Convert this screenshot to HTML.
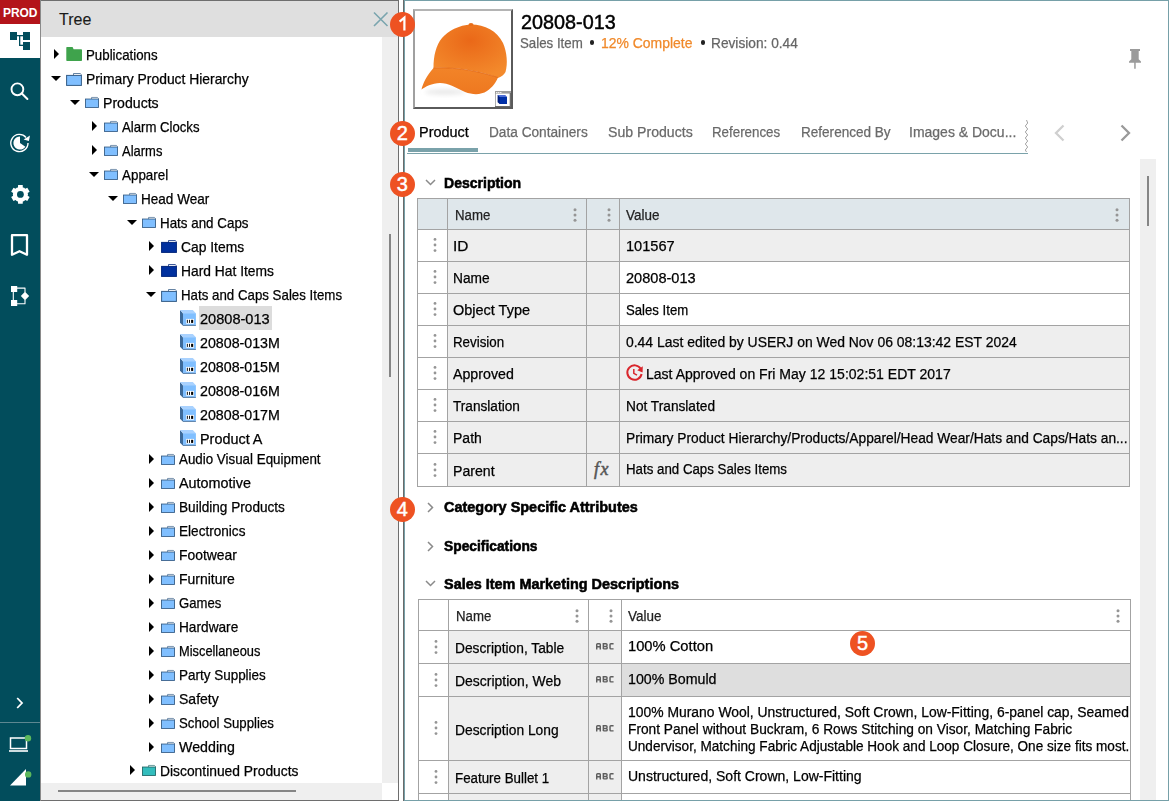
<!DOCTYPE html>
<html><head><meta charset="utf-8"><style>
*{margin:0;padding:0;box-sizing:border-box}
html,body{width:1169px;height:801px;overflow:hidden;background:#fff;font-family:"Liberation Sans",sans-serif;color:#000}
.a{position:absolute}
svg{position:absolute;overflow:visible}
.t{position:absolute;white-space:nowrap;line-height:20px;height:20px;-webkit-text-stroke:0.25px currentColor}
</style></head><body>
<div class="a" style="left:0;top:0;width:40px;height:801px;background:#024d5c"></div>
<div class="a" style="left:0;top:0;width:40px;height:24px;background:#b3141a"></div>
<div class="t" style="left:3px;top:3px;font-size:12px;font-weight:bold;color:#fff;letter-spacing:-0.1px;-webkit-text-stroke:0">PROD</div>
<div class="a" style="left:0;top:24px;width:40px;height:34px;background:#fff"></div>
<svg style="left:0;top:0" width="40" height="60" viewBox="0 0 40 60">
<g fill="#024d5c"><rect x="10" y="32" width="7" height="8"/><rect x="23" y="32" width="7" height="8"/><rect x="23" y="42" width="7" height="8"/>
<rect x="17" y="35" width="6" height="1.3"/><rect x="19" y="35" width="1.3" height="11"/><rect x="19" y="44.7" width="4" height="1.3"/></g></svg>
<svg style="left:0;top:70px" width="40" height="40"><circle cx="17.4" cy="19.3" r="5.9" fill="none" stroke="#fff" stroke-width="1.9"/>
<line x1="21.6" y1="23.2" x2="27.4" y2="29" stroke="#fff" stroke-width="2" stroke-linecap="round"/></svg>
<svg style="left:0;top:123px" width="40" height="40"><path d="M28 20 A8.6 8.6 0 1 1 25.99 14.47" fill="none" stroke="#fff" stroke-width="1.4"/>
<polygon points="30,12.6 28.9,18 23.6,16.4" fill="#fff"/>
<path d="M20 20 L25.41 23.79 A6.6 6.6 0 1 1 20 13.4 Z" fill="#fff"/></svg>
<svg style="left:0;top:180px" width="40" height="40"><polygon points="16.60,7.82 17.99,7.40 18.08,5.09 22.72,5.09 22.81,7.40 24.20,7.82 25.25,8.82 27.31,7.73 29.63,11.75 27.66,12.99 28.00,14.40 27.66,15.81 29.63,17.05 27.31,21.07 25.25,19.98 24.20,20.98 22.81,21.40 22.72,23.71 18.08,23.71 17.99,21.40 16.60,20.98 15.55,19.98 13.49,21.07 11.17,17.05 13.14,15.81 12.80,14.40 13.14,12.99 11.17,11.75 13.49,7.73 15.55,8.82" fill="#fff"/><circle cx="20.4" cy="14.4" r="3.4" fill="#024d5c"/></svg>
<svg style="left:0;top:230px" width="40" height="30"><path d="M12 5.2 H27 V24.8 L19.5 21.2 L12 24.8 Z" fill="none" stroke="#fff" stroke-width="2.3" stroke-linejoin="round"/></svg>
<svg style="left:0;top:280px" width="40" height="35"><g fill="#fff"><rect x="11" y="6" width="6.2" height="6"/><rect x="11" y="20" width="6.2" height="6"/>
<polygon points="25,11.8 29.2,16 25,20.2 20.8,16"/></g>
<g stroke="#fff" stroke-width="1.1" fill="none" stroke-linejoin="round"><path d="M17 8.1 H25 V12.5"/><path d="M17 23.8 H25 V19.5"/><path d="M13.3 12 V20"/></g></svg>
<svg style="left:0;top:690px" width="40" height="30"><path d="M17.2 8 L22 13 L17.2 18" fill="none" stroke="#fff" stroke-width="1.8"/></svg>
<div class="a" style="left:0;top:722px;width:40px;height:1px;background:#5d8791"></div>
<svg style="left:0;top:731.5px" width="40" height="30"><rect x="10.5" y="6" width="16" height="10.5" fill="none" stroke="#fff" stroke-width="1.5"/>
<rect x="9" y="18.2" width="19" height="1.6" fill="#fff"/><circle cx="28" cy="6.2" r="3.2" fill="#5cb85c"/></svg>
<svg style="left:0;top:760px" width="40" height="30"><polygon points="10,25.5 26,25.5 26,9" fill="#fff"/><circle cx="28.2" cy="14.4" r="3.2" fill="#5cb85c"/></svg>
<div class="a" style="left:40px;top:0;width:1px;height:801px;background:#8a8a8a"></div>
<div class="a" style="left:41px;top:0;width:358px;height:1px;background:#6e6e6e"></div>
<div class="a" style="left:41px;top:1px;width:357px;height:36px;background:#dfdfdf"></div>
<div class="t" style="left:59px;top:10px;font-size:16px;color:#1a1a1a;-webkit-text-stroke:0.1px #1a1a1a">Tree</div>
<svg style="left:370px;top:8px" width="22" height="22"><path d="M4 4.5 L17.5 18 M17.5 4.5 L4 18" stroke="#7aa5ae" stroke-width="1.6"/></svg>
<div class="a" style="left:382px;top:37px;width:16px;height:746px;background:#efefef"></div>
<div class="a" style="left:389px;top:234px;width:2px;height:143px;background:#858585"></div>
<div class="a" style="left:41px;top:783px;width:341px;height:17px;background:#efefef"></div>
<div class="a" style="left:58px;top:790px;width:238px;height:2px;background:#858585"></div>
<div class="a" style="left:398px;top:0;width:1px;height:801px;background:#6e6e6e"></div>
<div class="a" style="left:41px;top:800px;width:358px;height:1px;background:#6e6e6e"></div>
<svg style="left:54px;top:49px" width="5" height="10"><polygon points="0,0 5,5 0,10" fill="#000"/></svg>
<svg width="16" height="14" viewBox="0 0 16 14" preserveAspectRatio="none" style="left:66px;top:47px">
<path d="M0.3 0.6 Q0.3 0 1 0 H6.6 L7.6 2.3 H15.2 Q16 2.3 16 3 V13.3 Q16 14 15.2 14 H1 Q0.3 14 0.3 13.3 Z" fill="#3fa34c"/></svg>
<div class="t" style="left:85.80px;top:45.31px;font-size:14.2px;color:#000;font-weight:normal;transform:scaleX(0.9365);transform-origin:0 0;">Publications</div>
<svg style="left:51px;top:75.5px" width="10" height="5"><polygon points="0,0 10,0 5,5" fill="#000"/></svg>
<svg width="16" height="13" viewBox="0 0 16 13" preserveAspectRatio="none" style="left:66px;top:72.8px">
<path d="M7.5 2.5 V0.5 H14.2 L15.4 1.7 V2.5" fill="#fff" stroke="#335b85" stroke-width="0.75"/>
<rect x="0.6" y="2.4" width="14.8" height="10" fill="#80bfff" stroke="#335b85" stroke-width="1"/></svg>
<div class="t" style="left:85.80px;top:69.31px;font-size:14.2px;color:#000;font-weight:normal;transform:scaleX(0.9772);transform-origin:0 0;">Primary Product Hierarchy</div>
<svg style="left:70px;top:99.5px" width="10" height="5"><polygon points="0,0 10,0 5,5" fill="#000"/></svg>
<svg width="14" height="11" viewBox="0 0 16 13" preserveAspectRatio="none" style="left:85px;top:97px">
<path d="M7.5 2.5 V0.5 H14.2 L15.4 1.7 V2.5" fill="#fff" stroke="#335b85" stroke-width="0.75"/>
<rect x="0.6" y="2.4" width="14.8" height="10" fill="#80bfff" stroke="#335b85" stroke-width="1"/></svg>
<div class="t" style="left:102.80px;top:93.31px;font-size:14.2px;color:#000;font-weight:normal;transform:scaleX(0.9940);transform-origin:0 0;">Products</div>
<svg style="left:92px;top:121px" width="5" height="10"><polygon points="0,0 5,5 0,10" fill="#000"/></svg>
<svg width="14" height="11" viewBox="0 0 16 13" preserveAspectRatio="none" style="left:104px;top:121px">
<path d="M7.5 2.5 V0.5 H14.2 L15.4 1.7 V2.5" fill="#fff" stroke="#335b85" stroke-width="0.75"/>
<rect x="0.6" y="2.4" width="14.8" height="10" fill="#80bfff" stroke="#335b85" stroke-width="1"/></svg>
<div class="t" style="left:122.10px;top:117.31px;font-size:14.2px;color:#000;font-weight:normal;transform:scaleX(0.9279);transform-origin:0 0;">Alarm Clocks</div>
<svg style="left:92px;top:145px" width="5" height="10"><polygon points="0,0 5,5 0,10" fill="#000"/></svg>
<svg width="14" height="11" viewBox="0 0 16 13" preserveAspectRatio="none" style="left:104px;top:145px">
<path d="M7.5 2.5 V0.5 H14.2 L15.4 1.7 V2.5" fill="#fff" stroke="#335b85" stroke-width="0.75"/>
<rect x="0.6" y="2.4" width="14.8" height="10" fill="#80bfff" stroke="#335b85" stroke-width="1"/></svg>
<div class="t" style="left:122.10px;top:141.31px;font-size:14.2px;color:#000;font-weight:normal;transform:scaleX(0.9144);transform-origin:0 0;">Alarms</div>
<svg style="left:89px;top:171.5px" width="10" height="5"><polygon points="0,0 10,0 5,5" fill="#000"/></svg>
<svg width="14" height="11" viewBox="0 0 16 13" preserveAspectRatio="none" style="left:104px;top:169px">
<path d="M7.5 2.5 V0.5 H14.2 L15.4 1.7 V2.5" fill="#fff" stroke="#335b85" stroke-width="0.75"/>
<rect x="0.6" y="2.4" width="14.8" height="10" fill="#80bfff" stroke="#335b85" stroke-width="1"/></svg>
<div class="t" style="left:121.80px;top:165.31px;font-size:14.2px;color:#000;font-weight:normal;transform:scaleX(0.9440);transform-origin:0 0;">Apparel</div>
<svg style="left:108px;top:195.5px" width="10" height="5"><polygon points="0,0 10,0 5,5" fill="#000"/></svg>
<svg width="14" height="11" viewBox="0 0 16 13" preserveAspectRatio="none" style="left:123px;top:193px">
<path d="M7.5 2.5 V0.5 H14.2 L15.4 1.7 V2.5" fill="#fff" stroke="#335b85" stroke-width="0.75"/>
<rect x="0.6" y="2.4" width="14.8" height="10" fill="#80bfff" stroke="#335b85" stroke-width="1"/></svg>
<div class="t" style="left:140.90px;top:189.31px;font-size:14.2px;color:#000;font-weight:normal;transform:scaleX(0.9545);transform-origin:0 0;">Head Wear</div>
<svg style="left:127px;top:219.5px" width="10" height="5"><polygon points="0,0 10,0 5,5" fill="#000"/></svg>
<svg width="14" height="11" viewBox="0 0 16 13" preserveAspectRatio="none" style="left:142px;top:217px">
<path d="M7.5 2.5 V0.5 H14.2 L15.4 1.7 V2.5" fill="#fff" stroke="#335b85" stroke-width="0.75"/>
<rect x="0.6" y="2.4" width="14.8" height="10" fill="#80bfff" stroke="#335b85" stroke-width="1"/></svg>
<div class="t" style="left:160.10px;top:213.31px;font-size:14.2px;color:#000;font-weight:normal;transform:scaleX(0.9433);transform-origin:0 0;">Hats and Caps</div>
<svg style="left:149px;top:241px" width="5" height="10"><polygon points="0,0 5,5 0,10" fill="#000"/></svg>
<svg width="16" height="13" viewBox="0 0 16 13" preserveAspectRatio="none" style="left:161px;top:240px">
<path d="M7.5 2.5 V0.5 H14.2 L15.4 1.7 V2.5" fill="#fff" stroke="#00247a" stroke-width="0.75"/>
<rect x="0.6" y="2.4" width="14.8" height="10" fill="#00309e" stroke="#00247a" stroke-width="1"/></svg>
<div class="t" style="left:181.10px;top:237.31px;font-size:14.2px;color:#000;font-weight:normal;transform:scaleX(0.9767);transform-origin:0 0;">Cap Items</div>
<svg style="left:149px;top:265px" width="5" height="10"><polygon points="0,0 5,5 0,10" fill="#000"/></svg>
<svg width="16" height="13" viewBox="0 0 16 13" preserveAspectRatio="none" style="left:161px;top:264px">
<path d="M7.5 2.5 V0.5 H14.2 L15.4 1.7 V2.5" fill="#fff" stroke="#00247a" stroke-width="0.75"/>
<rect x="0.6" y="2.4" width="14.8" height="10" fill="#00309e" stroke="#00247a" stroke-width="1"/></svg>
<div class="t" style="left:181.10px;top:261.31px;font-size:14.2px;color:#000;font-weight:normal;transform:scaleX(0.9741);transform-origin:0 0;">Hard Hat Items</div>
<svg style="left:146px;top:291.5px" width="10" height="5"><polygon points="0,0 10,0 5,5" fill="#000"/></svg>
<svg width="16" height="13" viewBox="0 0 16 13" preserveAspectRatio="none" style="left:161px;top:288.8px">
<path d="M7.5 2.5 V0.5 H14.2 L15.4 1.7 V2.5" fill="#fff" stroke="#335b85" stroke-width="0.75"/>
<rect x="0.6" y="2.4" width="14.8" height="10" fill="#80bfff" stroke="#335b85" stroke-width="1"/></svg>
<div class="t" style="left:181.10px;top:285.31px;font-size:14.2px;color:#000;font-weight:normal;transform:scaleX(0.9369);transform-origin:0 0;">Hats and Caps Sales Items</div>
<svg width="17" height="17" viewBox="0 0 17 17" style="left:180px;top:310px">
<polygon points="0,0 3,3.2 3,15.8 0,12.8" fill="#3d6a9a"/>
<polygon points="0,0 12.8,0 15.9,3.2 3,3.2" fill="#a9d2ff"/>
<rect x="3" y="3.2" width="12.9" height="11.7" fill="#80bfff"/>
<rect x="3" y="14.9" width="12.9" height="0.9" fill="#3d6a9a"/>
<rect x="6.2" y="8.9" width="7.8" height="4.8" fill="#fff"/>
<rect x="6.9" y="9.8" width="0.9" height="3.1" fill="#000"/><rect x="9" y="9.8" width="0.9" height="3.1" fill="#000"/><rect x="11.1" y="9.8" width="2.1" height="3.1" fill="#000"/>
</svg>
<div class="a" style="left:199px;top:306px;width:73px;height:24px;background:#dcdcdc"></div>
<div class="t" style="left:200.10px;top:309.31px;font-size:14.2px;color:#000;font-weight:normal;transform:scaleX(1.0265);transform-origin:0 0;">20808-013</div>
<svg width="17" height="17" viewBox="0 0 17 17" style="left:180px;top:334px">
<polygon points="0,0 3,3.2 3,15.8 0,12.8" fill="#3d6a9a"/>
<polygon points="0,0 12.8,0 15.9,3.2 3,3.2" fill="#a9d2ff"/>
<rect x="3" y="3.2" width="12.9" height="11.7" fill="#80bfff"/>
<rect x="3" y="14.9" width="12.9" height="0.9" fill="#3d6a9a"/>
<rect x="6.2" y="8.9" width="7.8" height="4.8" fill="#fff"/>
<rect x="6.9" y="9.8" width="0.9" height="3.1" fill="#000"/><rect x="9" y="9.8" width="0.9" height="3.1" fill="#000"/><rect x="11.1" y="9.8" width="2.1" height="3.1" fill="#000"/>
</svg>
<div class="t" style="left:200.10px;top:333.31px;font-size:14.2px;color:#000;font-weight:normal;transform:scaleX(1.0022);transform-origin:0 0;">20808-013M</div>
<svg width="17" height="17" viewBox="0 0 17 17" style="left:180px;top:358px">
<polygon points="0,0 3,3.2 3,15.8 0,12.8" fill="#3d6a9a"/>
<polygon points="0,0 12.8,0 15.9,3.2 3,3.2" fill="#a9d2ff"/>
<rect x="3" y="3.2" width="12.9" height="11.7" fill="#80bfff"/>
<rect x="3" y="14.9" width="12.9" height="0.9" fill="#3d6a9a"/>
<rect x="6.2" y="8.9" width="7.8" height="4.8" fill="#fff"/>
<rect x="6.9" y="9.8" width="0.9" height="3.1" fill="#000"/><rect x="9" y="9.8" width="0.9" height="3.1" fill="#000"/><rect x="11.1" y="9.8" width="2.1" height="3.1" fill="#000"/>
</svg>
<div class="t" style="left:200.10px;top:357.31px;font-size:14.2px;color:#000;font-weight:normal;transform:scaleX(1.0022);transform-origin:0 0;">20808-015M</div>
<svg width="17" height="17" viewBox="0 0 17 17" style="left:180px;top:382px">
<polygon points="0,0 3,3.2 3,15.8 0,12.8" fill="#3d6a9a"/>
<polygon points="0,0 12.8,0 15.9,3.2 3,3.2" fill="#a9d2ff"/>
<rect x="3" y="3.2" width="12.9" height="11.7" fill="#80bfff"/>
<rect x="3" y="14.9" width="12.9" height="0.9" fill="#3d6a9a"/>
<rect x="6.2" y="8.9" width="7.8" height="4.8" fill="#fff"/>
<rect x="6.9" y="9.8" width="0.9" height="3.1" fill="#000"/><rect x="9" y="9.8" width="0.9" height="3.1" fill="#000"/><rect x="11.1" y="9.8" width="2.1" height="3.1" fill="#000"/>
</svg>
<div class="t" style="left:200.10px;top:381.31px;font-size:14.2px;color:#000;font-weight:normal;transform:scaleX(1.0022);transform-origin:0 0;">20808-016M</div>
<svg width="17" height="17" viewBox="0 0 17 17" style="left:180px;top:406px">
<polygon points="0,0 3,3.2 3,15.8 0,12.8" fill="#3d6a9a"/>
<polygon points="0,0 12.8,0 15.9,3.2 3,3.2" fill="#a9d2ff"/>
<rect x="3" y="3.2" width="12.9" height="11.7" fill="#80bfff"/>
<rect x="3" y="14.9" width="12.9" height="0.9" fill="#3d6a9a"/>
<rect x="6.2" y="8.9" width="7.8" height="4.8" fill="#fff"/>
<rect x="6.9" y="9.8" width="0.9" height="3.1" fill="#000"/><rect x="9" y="9.8" width="0.9" height="3.1" fill="#000"/><rect x="11.1" y="9.8" width="2.1" height="3.1" fill="#000"/>
</svg>
<div class="t" style="left:200.10px;top:405.31px;font-size:14.2px;color:#000;font-weight:normal;transform:scaleX(1.0022);transform-origin:0 0;">20808-017M</div>
<svg width="17" height="17" viewBox="0 0 17 17" style="left:180px;top:430px">
<polygon points="0,0 3,3.2 3,15.8 0,12.8" fill="#3d6a9a"/>
<polygon points="0,0 12.8,0 15.9,3.2 3,3.2" fill="#a9d2ff"/>
<rect x="3" y="3.2" width="12.9" height="11.7" fill="#80bfff"/>
<rect x="3" y="14.9" width="12.9" height="0.9" fill="#3d6a9a"/>
<rect x="6.2" y="8.9" width="7.8" height="4.8" fill="#fff"/>
<rect x="6.9" y="9.8" width="0.9" height="3.1" fill="#000"/><rect x="9" y="9.8" width="0.9" height="3.1" fill="#000"/><rect x="11.1" y="9.8" width="2.1" height="3.1" fill="#000"/>
</svg>
<div class="t" style="left:200.10px;top:429.31px;font-size:14.2px;color:#000;font-weight:normal;transform:scaleX(1.0151);transform-origin:0 0;">Product A</div>
<svg style="left:149px;top:454px" width="5" height="10"><polygon points="0,0 5,5 0,10" fill="#000"/></svg>
<svg width="14" height="11" viewBox="0 0 16 13" preserveAspectRatio="none" style="left:161px;top:453.5px">
<path d="M7.5 2.5 V0.5 H14.2 L15.4 1.7 V2.5" fill="#fff" stroke="#335b85" stroke-width="0.75"/>
<rect x="0.6" y="2.4" width="14.8" height="10" fill="#80bfff" stroke="#335b85" stroke-width="1"/></svg>
<div class="t" style="left:179.10px;top:449.31px;font-size:14.2px;color:#000;font-weight:normal;transform:scaleX(0.9415);transform-origin:0 0;">Audio Visual Equipment</div>
<svg style="left:149px;top:478px" width="5" height="10"><polygon points="0,0 5,5 0,10" fill="#000"/></svg>
<svg width="14" height="11" viewBox="0 0 16 13" preserveAspectRatio="none" style="left:161px;top:477.5px">
<path d="M7.5 2.5 V0.5 H14.2 L15.4 1.7 V2.5" fill="#fff" stroke="#335b85" stroke-width="0.75"/>
<rect x="0.6" y="2.4" width="14.8" height="10" fill="#80bfff" stroke="#335b85" stroke-width="1"/></svg>
<div class="t" style="left:179.10px;top:473.31px;font-size:14.2px;color:#000;font-weight:normal;transform:scaleX(1.0136);transform-origin:0 0;">Automotive</div>
<svg style="left:149px;top:502px" width="5" height="10"><polygon points="0,0 5,5 0,10" fill="#000"/></svg>
<svg width="14" height="11" viewBox="0 0 16 13" preserveAspectRatio="none" style="left:161px;top:501.5px">
<path d="M7.5 2.5 V0.5 H14.2 L15.4 1.7 V2.5" fill="#fff" stroke="#335b85" stroke-width="0.75"/>
<rect x="0.6" y="2.4" width="14.8" height="10" fill="#80bfff" stroke="#335b85" stroke-width="1"/></svg>
<div class="t" style="left:179.10px;top:497.31px;font-size:14.2px;color:#000;font-weight:normal;transform:scaleX(0.9593);transform-origin:0 0;">Building Products</div>
<svg style="left:149px;top:526px" width="5" height="10"><polygon points="0,0 5,5 0,10" fill="#000"/></svg>
<svg width="14" height="11" viewBox="0 0 16 13" preserveAspectRatio="none" style="left:161px;top:525.5px">
<path d="M7.5 2.5 V0.5 H14.2 L15.4 1.7 V2.5" fill="#fff" stroke="#335b85" stroke-width="0.75"/>
<rect x="0.6" y="2.4" width="14.8" height="10" fill="#80bfff" stroke="#335b85" stroke-width="1"/></svg>
<div class="t" style="left:179.10px;top:521.31px;font-size:14.2px;color:#000;font-weight:normal;transform:scaleX(0.9576);transform-origin:0 0;">Electronics</div>
<svg style="left:149px;top:550px" width="5" height="10"><polygon points="0,0 5,5 0,10" fill="#000"/></svg>
<svg width="14" height="11" viewBox="0 0 16 13" preserveAspectRatio="none" style="left:161px;top:549.5px">
<path d="M7.5 2.5 V0.5 H14.2 L15.4 1.7 V2.5" fill="#fff" stroke="#335b85" stroke-width="0.75"/>
<rect x="0.6" y="2.4" width="14.8" height="10" fill="#80bfff" stroke="#335b85" stroke-width="1"/></svg>
<div class="t" style="left:179.10px;top:545.31px;font-size:14.2px;color:#000;font-weight:normal;transform:scaleX(0.9799);transform-origin:0 0;">Footwear</div>
<svg style="left:149px;top:574px" width="5" height="10"><polygon points="0,0 5,5 0,10" fill="#000"/></svg>
<svg width="14" height="11" viewBox="0 0 16 13" preserveAspectRatio="none" style="left:161px;top:573.5px">
<path d="M7.5 2.5 V0.5 H14.2 L15.4 1.7 V2.5" fill="#fff" stroke="#335b85" stroke-width="0.75"/>
<rect x="0.6" y="2.4" width="14.8" height="10" fill="#80bfff" stroke="#335b85" stroke-width="1"/></svg>
<div class="t" style="left:179.10px;top:569.31px;font-size:14.2px;color:#000;font-weight:normal;transform:scaleX(0.9839);transform-origin:0 0;">Furniture</div>
<svg style="left:149px;top:598px" width="5" height="10"><polygon points="0,0 5,5 0,10" fill="#000"/></svg>
<svg width="14" height="11" viewBox="0 0 16 13" preserveAspectRatio="none" style="left:161px;top:597.5px">
<path d="M7.5 2.5 V0.5 H14.2 L15.4 1.7 V2.5" fill="#fff" stroke="#335b85" stroke-width="0.75"/>
<rect x="0.6" y="2.4" width="14.8" height="10" fill="#80bfff" stroke="#335b85" stroke-width="1"/></svg>
<div class="t" style="left:179.10px;top:593.31px;font-size:14.2px;color:#000;font-weight:normal;transform:scaleX(0.9243);transform-origin:0 0;">Games</div>
<svg style="left:149px;top:622px" width="5" height="10"><polygon points="0,0 5,5 0,10" fill="#000"/></svg>
<svg width="14" height="11" viewBox="0 0 16 13" preserveAspectRatio="none" style="left:161px;top:621.5px">
<path d="M7.5 2.5 V0.5 H14.2 L15.4 1.7 V2.5" fill="#fff" stroke="#335b85" stroke-width="0.75"/>
<rect x="0.6" y="2.4" width="14.8" height="10" fill="#80bfff" stroke="#335b85" stroke-width="1"/></svg>
<div class="t" style="left:179.10px;top:617.31px;font-size:14.2px;color:#000;font-weight:normal;transform:scaleX(0.9634);transform-origin:0 0;">Hardware</div>
<svg style="left:149px;top:646px" width="5" height="10"><polygon points="0,0 5,5 0,10" fill="#000"/></svg>
<svg width="14" height="11" viewBox="0 0 16 13" preserveAspectRatio="none" style="left:161px;top:645.5px">
<path d="M7.5 2.5 V0.5 H14.2 L15.4 1.7 V2.5" fill="#fff" stroke="#335b85" stroke-width="0.75"/>
<rect x="0.6" y="2.4" width="14.8" height="10" fill="#80bfff" stroke="#335b85" stroke-width="1"/></svg>
<div class="t" style="left:179.10px;top:641.31px;font-size:14.2px;color:#000;font-weight:normal;transform:scaleX(0.9047);transform-origin:0 0;">Miscellaneous</div>
<svg style="left:149px;top:670px" width="5" height="10"><polygon points="0,0 5,5 0,10" fill="#000"/></svg>
<svg width="14" height="11" viewBox="0 0 16 13" preserveAspectRatio="none" style="left:161px;top:669.5px">
<path d="M7.5 2.5 V0.5 H14.2 L15.4 1.7 V2.5" fill="#fff" stroke="#335b85" stroke-width="0.75"/>
<rect x="0.6" y="2.4" width="14.8" height="10" fill="#80bfff" stroke="#335b85" stroke-width="1"/></svg>
<div class="t" style="left:179.10px;top:665.31px;font-size:14.2px;color:#000;font-weight:normal;transform:scaleX(0.9492);transform-origin:0 0;">Party Supplies</div>
<svg style="left:149px;top:694px" width="5" height="10"><polygon points="0,0 5,5 0,10" fill="#000"/></svg>
<svg width="14" height="11" viewBox="0 0 16 13" preserveAspectRatio="none" style="left:161px;top:693.5px">
<path d="M7.5 2.5 V0.5 H14.2 L15.4 1.7 V2.5" fill="#fff" stroke="#335b85" stroke-width="0.75"/>
<rect x="0.6" y="2.4" width="14.8" height="10" fill="#80bfff" stroke="#335b85" stroke-width="1"/></svg>
<div class="t" style="left:179.10px;top:689.31px;font-size:14.2px;color:#000;font-weight:normal;transform:scaleX(0.9887);transform-origin:0 0;">Safety</div>
<svg style="left:149px;top:718px" width="5" height="10"><polygon points="0,0 5,5 0,10" fill="#000"/></svg>
<svg width="14" height="11" viewBox="0 0 16 13" preserveAspectRatio="none" style="left:161px;top:717.5px">
<path d="M7.5 2.5 V0.5 H14.2 L15.4 1.7 V2.5" fill="#fff" stroke="#335b85" stroke-width="0.75"/>
<rect x="0.6" y="2.4" width="14.8" height="10" fill="#80bfff" stroke="#335b85" stroke-width="1"/></svg>
<div class="t" style="left:179.10px;top:713.31px;font-size:14.2px;color:#000;font-weight:normal;transform:scaleX(0.9329);transform-origin:0 0;">School Supplies</div>
<svg style="left:149px;top:742px" width="5" height="10"><polygon points="0,0 5,5 0,10" fill="#000"/></svg>
<svg width="14" height="11" viewBox="0 0 16 13" preserveAspectRatio="none" style="left:161px;top:741.5px">
<path d="M7.5 2.5 V0.5 H14.2 L15.4 1.7 V2.5" fill="#fff" stroke="#335b85" stroke-width="0.75"/>
<rect x="0.6" y="2.4" width="14.8" height="10" fill="#80bfff" stroke="#335b85" stroke-width="1"/></svg>
<div class="t" style="left:179.10px;top:737.31px;font-size:14.2px;color:#000;font-weight:normal;transform:scaleX(1.0021);transform-origin:0 0;">Wedding</div>
<svg style="left:130px;top:765px" width="5" height="10"><polygon points="0,0 5,5 0,10" fill="#000"/></svg>
<svg width="14" height="11" viewBox="0 0 16 13" preserveAspectRatio="none" style="left:142px;top:765px">
<path d="M7.5 2.5 V0.5 H14.2 L15.4 1.7 V2.5" fill="#fff" stroke="#1d6666" stroke-width="0.75"/>
<rect x="0.6" y="2.4" width="14.8" height="10" fill="#33bdbd" stroke="#1d6666" stroke-width="1"/></svg>
<div class="t" style="left:160.10px;top:761.31px;font-size:14.2px;color:#000;font-weight:normal;transform:scaleX(0.9756);transform-origin:0 0;">Discontinued Products</div>
<div class="a" style="left:413px;top:9px;width:100px;height:100px;background:#fff;border-top:2px solid #b4b4b4;border-left:2px solid #a0a0a0;border-right:2px solid #5a5a5a;border-bottom:2px solid #5a5a5a"></div>
<svg style="left:415px;top:11px" width="96" height="96" viewBox="0 0 96 96">
<defs><filter id="bl" x="-50%" y="-50%" width="200%" height="200%"><feGaussianBlur stdDeviation="2"/></filter>
<radialGradient id="cg" cx="0.5" cy="0.3" r="0.7"><stop offset="0" stop-color="#ea6818"/><stop offset="1" stop-color="#f38a2c"/></radialGradient>
<linearGradient id="bg" x1="0" y1="0" x2="0" y2="1"><stop offset="0" stop-color="#f28428"/><stop offset="1" stop-color="#ee7820"/></linearGradient></defs>
<ellipse cx="30" cy="81" rx="20" ry="3" fill="#eaeaea" filter="url(#bl)"/>
<path d="M18.5 57 C18.5 45 21 34 27 27 C33 20 44 14 56 13.5 C70 13.5 82 20 88 32 C92 41 93 53 90.5 61 C89 64 86 66 83 67 L78 65 C65 61 45 56 18.5 57 Z" fill="url(#cg)"/>
<path d="M18.5 57 C45 56 65 61 83 66.5 C81 71 78 76 72 80 C66 84 58 84 50 81 C42 77 33 72 25 72 C17 72 10 76 6.5 78.5 C8 72 12 64 18.5 57 Z" fill="url(#bg)"/>
<path d="M18.5 57 C45 56 65 61 83 66.5" fill="none" stroke="#de6416" stroke-width="0.7"/>
<ellipse cx="56" cy="13.5" rx="2.5" ry="1.5" fill="#e86e1a"/>
</svg>
<svg style="left:495px;top:91px" width="16" height="16" viewBox="0 0 16 16">
<rect x="0" y="0" width="16" height="16" fill="#9c9c9c"/>
<rect x="0.8" y="2.6" width="14" height="12.4" fill="#fff"/>
<rect x="14.8" y="2" width="1.2" height="14" fill="#6a6a6a"/><rect x="0" y="15" width="16" height="1" fill="#6a6a6a"/>
<g fill="#fff"><rect x="1.2" y="1" width="1.2" height="1.1"/><rect x="3.2" y="1" width="1.2" height="1.1"/><rect x="5.2" y="1" width="1.2" height="1.1"/></g>
<polygon points="2.6,4 9.8,4 11.9,6 11.9,12.9 4.7,12.9 2.6,11.2" fill="#001c7a"/>
<polygon points="2.6,4 9.8,4 11.9,6 4.7,6" fill="#4f6fd8"/>
<rect x="4.7" y="6" width="7.2" height="6.9" fill="#0030a8"/>
</svg>
<div class="t" style="left:520.60px;top:11.59px;font-size:20.6px;color:#000;font-weight:normal;transform:scaleX(0.9624);transform-origin:0 0;-webkit-text-stroke:0.45px #000;">20808-013</div>
<div class="t" style="left:519.90px;top:33.31px;font-size:14.2px;color:#666;font-weight:normal;transform:scaleX(0.9362);transform-origin:0 0;">Sales Item</div>
<div class="a" style="left:589.5px;top:40.3px;width:4.4px;height:4.4px;border-radius:50%;background:#222"></div>
<div class="t" style="left:601.00px;top:33.31px;font-size:14.2px;color:#f0892a;font-weight:normal;transform:scaleX(0.9825);transform-origin:0 0;">12% Complete</div>
<div class="a" style="left:700.5px;top:40.3px;width:4.4px;height:4.4px;border-radius:50%;background:#222"></div>
<div class="t" style="left:710.60px;top:33.31px;font-size:14.2px;color:#666;font-weight:normal;transform:scaleX(0.9658);transform-origin:0 0;">Revision: 0.44</div>
<svg style="left:1125px;top:45px" width="20" height="28" viewBox="0 0 20 28"><path d="M5 4 H15 V6 H13.7 V14.2 L16 16.5 V17.7 H10.7 V23.7 H9.2 V17.7 H4 V16.5 L6.3 14.2 V6 H5 Z" fill="#9b9b9b"/></svg>
<div class="t" style="left:418.70px;top:122.17px;font-size:14px;color:#000;font-weight:normal;transform:scaleX(1.0322);transform-origin:0 0;">Product</div>
<div class="t" style="left:488.60px;top:122.17px;font-size:14px;color:#6a6a6a;font-weight:normal;transform:scaleX(0.9757);transform-origin:0 0;">Data Containers</div>
<div class="t" style="left:608.10px;top:122.17px;font-size:14px;color:#6a6a6a;font-weight:normal;transform:scaleX(1.0078);transform-origin:0 0;">Sub Products</div>
<div class="t" style="left:712.10px;top:122.17px;font-size:14px;color:#6a6a6a;font-weight:normal;transform:scaleX(0.9513);transform-origin:0 0;">References</div>
<div class="t" style="left:800.90px;top:122.17px;font-size:14px;color:#6a6a6a;font-weight:normal;transform:scaleX(0.9676);transform-origin:0 0;">Referenced By</div>
<div class="t" style="left:908.80px;top:122.17px;font-size:14px;color:#6a6a6a;font-weight:normal;transform:scaleX(0.9993);transform-origin:0 0;">Images &amp; Docu...</div>
<div class="a" style="left:408px;top:148px;width:70px;height:4px;background:#7aa2aa"></div>
<div class="a" style="left:407px;top:153px;width:621px;height:1px;background:#7aa2aa"></div>
<svg style="left:0;top:0" width="1169" height="160"><path d="M1026.5 120 L1027.7 123 L1025.3 126 L1027.7 129 L1025.3 132 L1027.7 135 L1025.3 138 L1027.7 141 L1025.3 144 L1027.7 147 L1025.3 150 L1026.5 152" fill="none" stroke="#999" stroke-width="0.9"/><path d="M1063.5 125.5 L1056 133 L1063.5 140.5" fill="none" stroke="#cfcfcf" stroke-width="2.3"/><path d="M1121.5 125.5 L1129 133 L1121.5 140.5" fill="none" stroke="#9a9a9a" stroke-width="2.3"/></svg>
<div class="a" style="left:1140px;top:159px;width:16px;height:641px;background:#efefef"></div>
<div class="a" style="left:1147px;top:176px;width:2px;height:50px;background:#858585"></div>
<svg style="left:424.5px;top:178.5px" width="12" height="8"><path d="M1 1 L5.5 5.5 L10 1" fill="none" stroke="#8a8a8a" stroke-width="1.5"/></svg>
<div class="t" style="left:443.60px;top:172.74px;font-size:14.4px;color:#000;font-weight:bold;transform:scaleX(0.9746);transform-origin:0 0;-webkit-text-stroke:0.55px #000;">Description</div>
<svg style="left:426.5px;top:501.5px" width="8" height="12"><path d="M1 1 L5.5 5.5 L1 10" fill="none" stroke="#8a8a8a" stroke-width="1.5"/></svg>
<div class="t" style="left:443.60px;top:496.54px;font-size:14.4px;color:#000;font-weight:bold;transform:scaleX(1.0042);transform-origin:0 0;-webkit-text-stroke:0.55px #000;">Category Specific Attributes</div>
<svg style="left:426.5px;top:540.5px" width="8" height="12"><path d="M1 1 L5.5 5.5 L1 10" fill="none" stroke="#8a8a8a" stroke-width="1.5"/></svg>
<div class="t" style="left:443.60px;top:535.54px;font-size:14.4px;color:#000;font-weight:bold;transform:scaleX(0.9588);transform-origin:0 0;-webkit-text-stroke:0.55px #000;">Specifications</div>
<svg style="left:424.5px;top:579.5px" width="12" height="8"><path d="M1 1 L5.5 5.5 L10 1" fill="none" stroke="#8a8a8a" stroke-width="1.5"/></svg>
<div class="t" style="left:444.10px;top:574.24px;font-size:14.4px;color:#000;font-weight:bold;transform:scaleX(1.0031);transform-origin:0 0;-webkit-text-stroke:0.55px #000;">Sales Item Marketing Descriptions</div>
<div class="a" style="left:417px;top:198px;width:712px;height:31px;background:#dfe7eb"></div>
<div class="a" style="left:447px;top:229px;width:172px;height:32px;background:#eeeeee"></div>
<div class="a" style="left:619px;top:229px;width:510px;height:32px;background:#eeeeee"></div>
<div class="a" style="left:447px;top:261px;width:172px;height:32px;background:#eeeeee"></div>
<div class="a" style="left:447px;top:293px;width:172px;height:32px;background:#eeeeee"></div>
<div class="a" style="left:447px;top:325px;width:172px;height:32px;background:#eeeeee"></div>
<div class="a" style="left:619px;top:325px;width:510px;height:32px;background:#eeeeee"></div>
<div class="a" style="left:447px;top:357px;width:172px;height:32px;background:#eeeeee"></div>
<div class="a" style="left:619px;top:357px;width:510px;height:32px;background:#eeeeee"></div>
<div class="a" style="left:447px;top:389px;width:172px;height:32px;background:#eeeeee"></div>
<div class="a" style="left:619px;top:389px;width:510px;height:32px;background:#eeeeee"></div>
<div class="a" style="left:447px;top:421px;width:172px;height:32px;background:#eeeeee"></div>
<div class="a" style="left:619px;top:421px;width:510px;height:32px;background:#eeeeee"></div>
<div class="a" style="left:447px;top:453px;width:172px;height:33px;background:#eeeeee"></div>
<div class="a" style="left:619px;top:453px;width:510px;height:33px;background:#eeeeee"></div>
<div class="a" style="left:417px;top:198px;width:713px;height:1px;background:#a3a3a3"></div>
<div class="a" style="left:417px;top:229px;width:713px;height:1px;background:#a3a3a3"></div>
<div class="a" style="left:417px;top:261px;width:713px;height:1px;background:#a3a3a3"></div>
<div class="a" style="left:417px;top:293px;width:713px;height:1px;background:#a3a3a3"></div>
<div class="a" style="left:417px;top:325px;width:713px;height:1px;background:#a3a3a3"></div>
<div class="a" style="left:417px;top:357px;width:713px;height:1px;background:#a3a3a3"></div>
<div class="a" style="left:417px;top:389px;width:713px;height:1px;background:#a3a3a3"></div>
<div class="a" style="left:417px;top:421px;width:713px;height:1px;background:#a3a3a3"></div>
<div class="a" style="left:417px;top:453px;width:713px;height:1px;background:#a3a3a3"></div>
<div class="a" style="left:417px;top:486px;width:713px;height:1px;background:#a3a3a3"></div>
<div class="a" style="left:417px;top:198px;width:1px;height:289px;background:#a3a3a3"></div>
<div class="a" style="left:447px;top:198px;width:1px;height:289px;background:#a3a3a3"></div>
<div class="a" style="left:586px;top:198px;width:1px;height:289px;background:#a3a3a3"></div>
<div class="a" style="left:619px;top:198px;width:1px;height:289px;background:#a3a3a3"></div>
<div class="a" style="left:1129px;top:198px;width:1px;height:289px;background:#a3a3a3"></div>
<div class="t" style="left:454.90px;top:205.37px;font-size:14px;color:#222;font-weight:normal;transform:scaleX(0.9453);transform-origin:0 0;">Name</div>
<div class="t" style="left:626.10px;top:205.37px;font-size:14px;color:#222;font-weight:normal;transform:scaleX(0.9607);transform-origin:0 0;">Value</div>
<svg style="left:572px;top:205.5px" width="6" height="18"><g fill="#959595"><circle cx="3" cy="3.7" r="1.5"/><circle cx="3" cy="9" r="1.5"/><circle cx="3" cy="14.3" r="1.5"/></g></svg>
<svg style="left:605.7px;top:205.5px" width="6" height="18"><g fill="#959595"><circle cx="3" cy="3.7" r="1.5"/><circle cx="3" cy="9" r="1.5"/><circle cx="3" cy="14.3" r="1.5"/></g></svg>
<svg style="left:1114px;top:205.5px" width="6" height="18"><g fill="#959595"><circle cx="3" cy="3.7" r="1.5"/><circle cx="3" cy="9" r="1.5"/><circle cx="3" cy="14.3" r="1.5"/></g></svg>
<svg style="left:432px;top:236.0px" width="6" height="18"><g fill="#959595"><circle cx="3" cy="3.4000000000000004" r="1.4"/><circle cx="3" cy="9" r="1.4"/><circle cx="3" cy="14.6" r="1.4"/></g></svg>
<div class="t" style="left:453.10px;top:236.17px;font-size:14px;color:#000;font-weight:normal;transform:scaleX(1.1000);transform-origin:0 0;">ID</div>
<div class="t" style="left:625.60px;top:235.77px;font-size:14px;color:#000;font-weight:normal;transform:scaleX(1.0426);transform-origin:0 0;">101567</div>
<svg style="left:432px;top:268.0px" width="6" height="18"><g fill="#959595"><circle cx="3" cy="3.4000000000000004" r="1.4"/><circle cx="3" cy="9" r="1.4"/><circle cx="3" cy="14.6" r="1.4"/></g></svg>
<div class="t" style="left:453.10px;top:268.37px;font-size:14px;color:#000;font-weight:normal;transform:scaleX(0.9801);transform-origin:0 0;">Name</div>
<div class="t" style="left:625.60px;top:267.97px;font-size:14px;color:#000;font-weight:normal;transform:scaleX(1.0397);transform-origin:0 0;">20808-013</div>
<svg style="left:432px;top:300.0px" width="6" height="18"><g fill="#959595"><circle cx="3" cy="3.4000000000000004" r="1.4"/><circle cx="3" cy="9" r="1.4"/><circle cx="3" cy="14.6" r="1.4"/></g></svg>
<div class="t" style="left:453.10px;top:300.37px;font-size:14px;color:#000;font-weight:normal;transform:scaleX(1.0343);transform-origin:0 0;">Object Type</div>
<div class="t" style="left:625.60px;top:299.97px;font-size:14px;color:#000;font-weight:normal;transform:scaleX(0.9405);transform-origin:0 0;">Sales Item</div>
<svg style="left:432px;top:332.0px" width="6" height="18"><g fill="#959595"><circle cx="3" cy="3.4000000000000004" r="1.4"/><circle cx="3" cy="9" r="1.4"/><circle cx="3" cy="14.6" r="1.4"/></g></svg>
<div class="t" style="left:453.10px;top:332.37px;font-size:14px;color:#000;font-weight:normal;transform:scaleX(0.9518);transform-origin:0 0;">Revision</div>
<div class="t" style="left:625.60px;top:332.37px;font-size:14px;color:#000;font-weight:normal;transform:scaleX(0.9952);transform-origin:0 0;">0.44 Last edited by USERJ on Wed Nov 06 08:13:42 EST 2024</div>
<svg style="left:432px;top:364.0px" width="6" height="18"><g fill="#959595"><circle cx="3" cy="3.4000000000000004" r="1.4"/><circle cx="3" cy="9" r="1.4"/><circle cx="3" cy="14.6" r="1.4"/></g></svg>
<div class="t" style="left:453.10px;top:364.37px;font-size:14px;color:#000;font-weight:normal;transform:scaleX(1.0146);transform-origin:0 0;">Approved</div>
<svg style="left:624.5px;top:363.3px" width="20" height="20" viewBox="0 0 20 20"><path d="M15.7 5.8 A7.2 7.2 0 1 0 16.6 11" fill="none" stroke="#d9262c" stroke-width="2"/>
<polygon points="17.8,3.2 17.6,9.4 12.2,7.2" fill="#d9262c"/><path d="M8.8 6 V10.4 L12 12.2" fill="none" stroke="#d9262c" stroke-width="1.5"/></svg>
<div class="t" style="left:645.50px;top:364.37px;font-size:14px;color:#000;font-weight:normal;transform:scaleX(1.0022);transform-origin:0 0;">Last Approved on Fri May 12 15:02:51 EDT 2017</div>
<svg style="left:432px;top:396.0px" width="6" height="18"><g fill="#959595"><circle cx="3" cy="3.4000000000000004" r="1.4"/><circle cx="3" cy="9" r="1.4"/><circle cx="3" cy="14.6" r="1.4"/></g></svg>
<div class="t" style="left:453.10px;top:396.37px;font-size:14px;color:#000;font-weight:normal;transform:scaleX(0.9734);transform-origin:0 0;">Translation</div>
<div class="t" style="left:625.60px;top:396.37px;font-size:14px;color:#000;font-weight:normal;transform:scaleX(0.9776);transform-origin:0 0;">Not Translated</div>
<svg style="left:432px;top:428.0px" width="6" height="18"><g fill="#959595"><circle cx="3" cy="3.4000000000000004" r="1.4"/><circle cx="3" cy="9" r="1.4"/><circle cx="3" cy="14.6" r="1.4"/></g></svg>
<div class="t" style="left:453.10px;top:428.37px;font-size:14px;color:#000;font-weight:normal;transform:scaleX(1.0001);transform-origin:0 0;">Path</div>
<div class="t" style="left:625.60px;top:428.37px;font-size:14px;color:#000;font-weight:normal;transform:scaleX(0.9830);transform-origin:0 0;">Primary Product Hierarchy/Products/Apparel/Head Wear/Hats and Caps/Hats an...</div>
<svg style="left:432px;top:460.5px" width="6" height="18"><g fill="#959595"><circle cx="3" cy="3.4000000000000004" r="1.4"/><circle cx="3" cy="9" r="1.4"/><circle cx="3" cy="14.6" r="1.4"/></g></svg>
<div class="t" style="left:453.10px;top:461.37px;font-size:14px;color:#000;font-weight:normal;transform:scaleX(1.0086);transform-origin:0 0;">Parent</div>
<div class="t" style="left:625.60px;top:458.97px;font-size:14px;color:#000;font-weight:normal;transform:scaleX(0.9492);transform-origin:0 0;">Hats and Caps Sales Items</div>
<div class="t" style="left:594px;top:458.5px;font-size:18px;font-family:'Liberation Serif',serif;font-style:italic;color:#555;letter-spacing:1.5px;-webkit-text-stroke:0.5px #555">fx</div>
<div class="a" style="left:448px;top:630px;width:173px;height:33px;background:#eeeeee"></div>
<div class="a" style="left:448px;top:663px;width:173px;height:33px;background:#eeeeee"></div>
<div class="a" style="left:621px;top:663px;width:509px;height:33px;background:#dedede"></div>
<div class="a" style="left:448px;top:696px;width:173px;height:64px;background:#eeeeee"></div>
<div class="a" style="left:448px;top:760px;width:173px;height:33px;background:#eeeeee"></div>
<div class="a" style="left:448px;top:793px;width:173px;height:7px;background:#eeeeee"></div>
<div class="a" style="left:418px;top:599px;width:713px;height:1px;background:#a3a3a3"></div>
<div class="a" style="left:418px;top:630px;width:713px;height:1px;background:#a3a3a3"></div>
<div class="a" style="left:418px;top:663px;width:713px;height:1px;background:#a3a3a3"></div>
<div class="a" style="left:418px;top:696px;width:713px;height:1px;background:#a3a3a3"></div>
<div class="a" style="left:418px;top:760px;width:713px;height:1px;background:#a3a3a3"></div>
<div class="a" style="left:418px;top:793px;width:713px;height:1px;background:#a3a3a3"></div>
<div class="a" style="left:418px;top:599px;width:1px;height:201px;background:#a3a3a3"></div>
<div class="a" style="left:448px;top:599px;width:1px;height:201px;background:#a3a3a3"></div>
<div class="a" style="left:588px;top:599px;width:1px;height:201px;background:#a3a3a3"></div>
<div class="a" style="left:621px;top:599px;width:1px;height:201px;background:#a3a3a3"></div>
<div class="a" style="left:1130px;top:599px;width:1px;height:201px;background:#a3a3a3"></div>
<div class="t" style="left:455.70px;top:606.37px;font-size:14px;color:#222;font-weight:normal;transform:scaleX(0.9453);transform-origin:0 0;">Name</div>
<div class="t" style="left:628.20px;top:606.37px;font-size:14px;color:#222;font-weight:normal;transform:scaleX(0.9607);transform-origin:0 0;">Value</div>
<svg style="left:573.9px;top:606.5px" width="6" height="18"><g fill="#959595"><circle cx="3" cy="3.7" r="1.5"/><circle cx="3" cy="9" r="1.5"/><circle cx="3" cy="14.3" r="1.5"/></g></svg>
<svg style="left:607.8px;top:606.5px" width="6" height="18"><g fill="#959595"><circle cx="3" cy="3.7" r="1.5"/><circle cx="3" cy="9" r="1.5"/><circle cx="3" cy="14.3" r="1.5"/></g></svg>
<svg style="left:1115px;top:606.5px" width="6" height="18"><g fill="#959595"><circle cx="3" cy="3.7" r="1.5"/><circle cx="3" cy="9" r="1.5"/><circle cx="3" cy="14.3" r="1.5"/></g></svg>
<svg style="left:433px;top:637.5px" width="6" height="18"><g fill="#959595"><circle cx="3" cy="3.4000000000000004" r="1.4"/><circle cx="3" cy="9" r="1.4"/><circle cx="3" cy="14.6" r="1.4"/></g></svg>
<svg style="left:595.8px;top:643.00px" width="20" height="8"><g fill="none" stroke="#5e5e5e" stroke-width="1.45"><path d="M0.725 6.6 V1.6 Q0.725 0.725 1.6 0.725 H3.5 Q4.275 0.725 4.275 1.6 V6.6 M0.725 3.8 H4.275"/><path d="M0.725 5.875 V0.725 H3.4 Q4.375 0.725 4.375 1.5 V2.5 Q4.375 3.5 3.6 3.5 H0.725 M3.6 3.5 Q4.575 3.5 4.575 4.5 V5 Q4.575 5.875 3.6 5.875 H0.725" transform="translate(6.6,0)"/><path d="M4.275 0.725 H1.6 Q0.725 0.725 0.725 1.6 V5 Q0.725 5.875 1.6 5.875 H4.275" transform="translate(13.3,0)"/></g></svg>
<div class="t" style="left:455.30px;top:637.97px;font-size:14px;color:#000;font-weight:normal;transform:scaleX(0.9836);transform-origin:0 0;">Description, Table</div>
<div class="t" style="left:627.50px;top:636.07px;font-size:14px;color:#000;font-weight:normal;transform:scaleX(1.0514);transform-origin:0 0;">100% Cotton</div>
<svg style="left:433px;top:670.5px" width="6" height="18"><g fill="#959595"><circle cx="3" cy="3.4000000000000004" r="1.4"/><circle cx="3" cy="9" r="1.4"/><circle cx="3" cy="14.6" r="1.4"/></g></svg>
<svg style="left:595.8px;top:676.00px" width="20" height="8"><g fill="none" stroke="#5e5e5e" stroke-width="1.45"><path d="M0.725 6.6 V1.6 Q0.725 0.725 1.6 0.725 H3.5 Q4.275 0.725 4.275 1.6 V6.6 M0.725 3.8 H4.275"/><path d="M0.725 5.875 V0.725 H3.4 Q4.375 0.725 4.375 1.5 V2.5 Q4.375 3.5 3.6 3.5 H0.725 M3.6 3.5 Q4.575 3.5 4.575 4.5 V5 Q4.575 5.875 3.6 5.875 H0.725" transform="translate(6.6,0)"/><path d="M4.275 0.725 H1.6 Q0.725 0.725 0.725 1.6 V5 Q0.725 5.875 1.6 5.875 H4.275" transform="translate(13.3,0)"/></g></svg>
<div class="t" style="left:455.30px;top:671.07px;font-size:14px;color:#000;font-weight:normal;transform:scaleX(0.9959);transform-origin:0 0;">Description, Web</div>
<div class="t" style="left:627.50px;top:669.17px;font-size:14px;color:#000;font-weight:normal;transform:scaleX(1.0154);transform-origin:0 0;">100% Bomuld</div>
<svg style="left:433px;top:719.0px" width="6" height="18"><g fill="#959595"><circle cx="3" cy="3.4000000000000004" r="1.4"/><circle cx="3" cy="9" r="1.4"/><circle cx="3" cy="14.6" r="1.4"/></g></svg>
<svg style="left:595.8px;top:724.50px" width="20" height="8"><g fill="none" stroke="#5e5e5e" stroke-width="1.45"><path d="M0.725 6.6 V1.6 Q0.725 0.725 1.6 0.725 H3.5 Q4.275 0.725 4.275 1.6 V6.6 M0.725 3.8 H4.275"/><path d="M0.725 5.875 V0.725 H3.4 Q4.375 0.725 4.375 1.5 V2.5 Q4.375 3.5 3.6 3.5 H0.725 M3.6 3.5 Q4.575 3.5 4.575 4.5 V5 Q4.575 5.875 3.6 5.875 H0.725" transform="translate(6.6,0)"/><path d="M4.275 0.725 H1.6 Q0.725 0.725 0.725 1.6 V5 Q0.725 5.875 1.6 5.875 H4.275" transform="translate(13.3,0)"/></g></svg>
<div class="t" style="left:455.30px;top:719.67px;font-size:14px;color:#000;font-weight:normal;transform:scaleX(0.9862);transform-origin:0 0;">Description Long</div>
<div class="t" style="left:627.80px;top:701.97px;font-size:14px;color:#000;font-weight:normal;transform:scaleX(0.9926);transform-origin:0 0;">100% Murano Wool, Unstructured, Soft Crown, Low-Fitting, 6-panel cap, Seamed</div>
<div class="t" style="left:627.80px;top:718.87px;font-size:14px;color:#000;font-weight:normal;transform:scaleX(0.9798);transform-origin:0 0;">Front Panel without Buckram, 6 Rows Stitching on Visor, Matching Fabric</div>
<div class="t" style="left:627.80px;top:735.77px;font-size:14px;color:#000;font-weight:normal;transform:scaleX(0.9701);transform-origin:0 0;">Undervisor, Matching Fabric Adjustable Hook and Loop Closure, One size fits most.</div>
<svg style="left:433px;top:767.5px" width="6" height="18"><g fill="#959595"><circle cx="3" cy="3.4000000000000004" r="1.4"/><circle cx="3" cy="9" r="1.4"/><circle cx="3" cy="14.6" r="1.4"/></g></svg>
<svg style="left:595.8px;top:773.00px" width="20" height="8"><g fill="none" stroke="#5e5e5e" stroke-width="1.45"><path d="M0.725 6.6 V1.6 Q0.725 0.725 1.6 0.725 H3.5 Q4.275 0.725 4.275 1.6 V6.6 M0.725 3.8 H4.275"/><path d="M0.725 5.875 V0.725 H3.4 Q4.375 0.725 4.375 1.5 V2.5 Q4.375 3.5 3.6 3.5 H0.725 M3.6 3.5 Q4.575 3.5 4.575 4.5 V5 Q4.575 5.875 3.6 5.875 H0.725" transform="translate(6.6,0)"/><path d="M4.275 0.725 H1.6 Q0.725 0.725 0.725 1.6 V5 Q0.725 5.875 1.6 5.875 H4.275" transform="translate(13.3,0)"/></g></svg>
<div class="t" style="left:455.30px;top:767.77px;font-size:14px;color:#000;font-weight:normal;transform:scaleX(0.9532);transform-origin:0 0;">Feature Bullet 1</div>
<div class="t" style="left:627.50px;top:765.87px;font-size:14px;color:#000;font-weight:normal;transform:scaleX(1.0008);transform-origin:0 0;">Unstructured, Soft Crown, Low-Fitting</div>
<div class="a" style="left:403px;top:0;width:1px;height:801px;background:#6a6a6a"></div>
<div class="a" style="left:404px;top:0;width:1px;height:801px;background:#76a0a8"></div>
<div class="a" style="left:404px;top:0;width:765px;height:1px;background:#76a0a8"></div>
<div class="a" style="left:1168px;top:0;width:1px;height:801px;background:#76a0a8"></div>
<div class="a" style="left:404px;top:800px;width:765px;height:1px;background:#76a0a8"></div>
<div class="a" style="left:389.80px;top:11.70px;width:25.4px;height:25.4px;border-radius:50%;background:#ee5222"></div>
<svg style="left:389.5px;top:11.399999999999999px" width="26" height="26"><path d="M9.6 10.6 L14.4 6.6 V19.6" fill="none" stroke="#fff" stroke-width="2.2" stroke-linejoin="miter"/></svg>
<div class="a" style="left:389.65px;top:120.70px;width:25.4px;height:25.4px;border-radius:50%;background:#ee5222"></div>
<div class="a" style="left:389.35px;top:120.30px;width:26px;height:26px;color:#fff;font-size:20px;line-height:26px;text-align:center;-webkit-text-stroke:0.45px #fff">2</div>
<div class="a" style="left:389.70px;top:171.70px;width:25.4px;height:25.4px;border-radius:50%;background:#ee5222"></div>
<div class="a" style="left:389.4px;top:171.30px;width:26px;height:26px;color:#fff;font-size:20px;line-height:26px;text-align:center;-webkit-text-stroke:0.45px #fff">3</div>
<div class="a" style="left:389.70px;top:496.70px;width:25.4px;height:25.4px;border-radius:50%;background:#ee5222"></div>
<div class="a" style="left:389.4px;top:496.30px;width:26px;height:26px;color:#fff;font-size:20px;line-height:26px;text-align:center;-webkit-text-stroke:0.45px #fff">4</div>
<div class="a" style="left:849.80px;top:630.60px;width:25.4px;height:25.4px;border-radius:50%;background:#ee5222"></div>
<div class="a" style="left:849.5px;top:630.20px;width:26px;height:26px;color:#fff;font-size:20px;line-height:26px;text-align:center;-webkit-text-stroke:0.45px #fff">5</div>
</body></html>
